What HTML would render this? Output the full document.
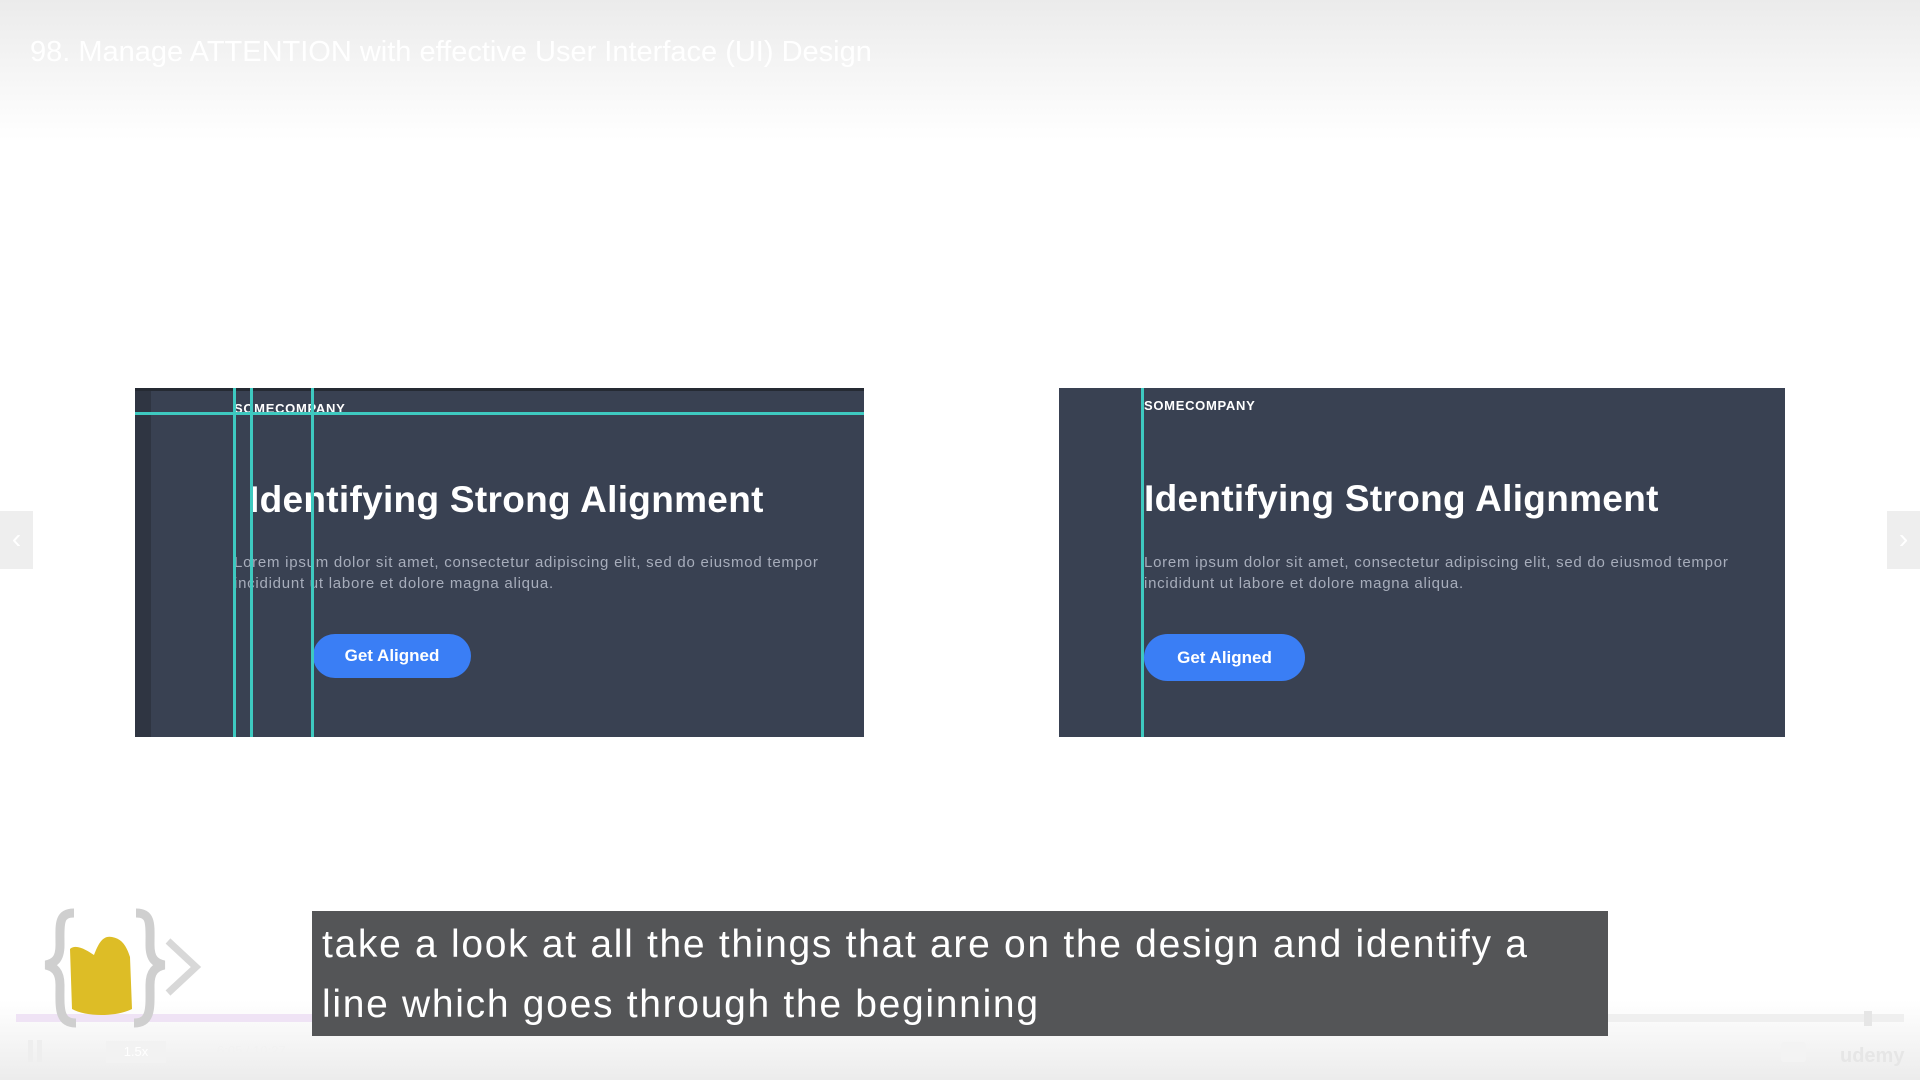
<!DOCTYPE html>
<html><head><meta charset="utf-8"><style>
*{margin:0;padding:0;box-sizing:border-box}
body{width:1920px;height:1080px;overflow:hidden;background:#fff;position:relative;font-family:"Liberation Sans",sans-serif}
.top{position:absolute;left:0;top:0;width:1920px;height:140px;background:linear-gradient(#ebebeb,#fff)}
.title{position:absolute;left:30px;top:36px;font-size:29px;color:#fff;white-space:nowrap}
.bot{position:absolute;left:0;top:1000px;width:1920px;height:80px;background:linear-gradient(#fff,#ececec)}
.card{position:absolute;top:388px;height:349px;background:#394152;overflow:hidden}
.vl{position:absolute;top:0;bottom:0;width:3px;background:#3ec9c0}
.hl{position:absolute;left:0;right:0;height:3px;background:#3ec9c0}
.co{position:absolute;font-size:13px;font-weight:bold;color:#fff;letter-spacing:0.7px}
.h{position:absolute;font-size:37px;font-weight:bold;color:#fff;white-space:nowrap;letter-spacing:0.3px}
.p{position:absolute;font-size:15px;color:#a7adbb;line-height:21px;white-space:nowrap;letter-spacing:0.75px}
.btn{position:absolute;background:#3a7ef5;color:#fff;font-weight:bold;font-size:17px;border-radius:24px;text-align:center}
.arrow{position:absolute;top:511px;width:33px;height:58px;background:#eeeeee;color:#fff;font-size:28px;text-align:center;line-height:56px}
.sub{position:absolute;left:312px;top:911px;width:1296px;height:125px;background:#545557;color:#fff;font-size:39px;line-height:60px;padding:4px 10px;white-space:nowrap;letter-spacing:1.7px}
</style></head><body>
<div class="top"></div>
<div class="title">98. Manage ATTENTION with effective User Interface (UI) Design</div>

<div class="card" style="left:135px;width:729px">
  <div style="position:absolute;left:0;top:0;width:16px;bottom:0;background:#2f3542"></div>
  <div style="position:absolute;left:0;top:0;right:0;height:3px;background:#252a33"></div>
  <div class="co" style="left:99px;top:13px">SOMECOMPANY</div>
  <div class="h" style="left:114px;top:91px">Identifying Strong Alignment</div>
  <div class="p" style="left:99px;top:164px">Lorem ipsum dolor sit amet, consectetur adipiscing elit, sed do eiusmod tempor<br>incididunt ut labore et dolore magna aliqua.</div>
  <div class="btn" style="left:178px;top:246px;width:158px;height:44px;line-height:44px">Get Aligned</div>
  <div class="hl" style="top:24px"></div>
  <div class="vl" style="left:98px"></div>
  <div class="vl" style="left:115px"></div>
  <div class="vl" style="left:176px"></div>
</div>

<div class="card" style="left:1059px;width:726px">
  <div class="co" style="left:85px;top:10px">SOMECOMPANY</div>
  <div class="h" style="left:85px;top:90px">Identifying Strong Alignment</div>
  <div class="p" style="left:85px;top:164px">Lorem ipsum dolor sit amet, consectetur adipiscing elit, sed do eiusmod tempor<br>incididunt ut labore et dolore magna aliqua.</div>
  <div class="btn" style="left:85px;top:246px;width:161px;height:47px;line-height:47px">Get Aligned</div>
  <div class="vl" style="left:82px"></div>
</div>

<div class="arrow" style="left:0">‹</div>
<div class="arrow" style="left:1887px">›</div>

<div class="bot"></div>
<div style="position:absolute;left:16px;top:1014px;width:1098px;height:8px;background:#efe3f5"></div>
<div style="position:absolute;left:1114px;top:1014px;width:790px;height:8px;background:#efefef"></div>
<div style="position:absolute;left:1864px;top:1011px;width:8px;height:15px;background:#e6e6e6"></div>

<svg style="position:absolute;left:36px;top:905px" width="170" height="130" viewBox="0 0 170 130">
  <path d="M38 8 C22 8 24 20 24 40 C24 55 18 58 10 60 C18 62 24 66 24 80 C24 102 22 118 40 118" fill="none" stroke="#cfcfcf" stroke-width="9"/>
  <path d="M100 8 C116 8 114 20 114 40 C114 55 120 58 128 60 C120 62 114 66 114 80 C114 102 116 118 98 118" fill="none" stroke="#cfcfcf" stroke-width="9"/>
  <path d="M132 36 L160 62 L132 88" fill="none" stroke="#d8d8d8" stroke-width="7"/>
  <path d="M34 44 C40 38 52 46 58 50 C62 40 66 30 76 32 C86 34 90 40 94 52 L96 104 C80 112 50 112 36 104 Z" fill="#ddbd26"/>
</svg>

<div style="position:absolute;left:28px;top:1040px;width:14px;height:22px;border-left:5px solid #eee;border-right:5px solid #eee"></div>
<div style="position:absolute;left:106px;top:1041px;width:60px;height:22px;background:#f2f2f2;color:#fff;font-size:13px;text-align:center;line-height:22px">1.5x</div>
<div style="position:absolute;left:217px;top:1043px;color:#f2f2f2;font-size:13px">6:05 / 10:27</div>
<div style="position:absolute;left:1781px;top:1042px;width:25px;height:20px;background:#f3f3f3;border-radius:3px"></div>
<div style="position:absolute;left:1840px;top:1045px;color:#e6e6e6;font-size:20px;font-weight:bold">udemy</div>

<div class="sub">take a look at all the things that are on the design and identify a<br>line which goes through the beginning</div>
</body></html>
